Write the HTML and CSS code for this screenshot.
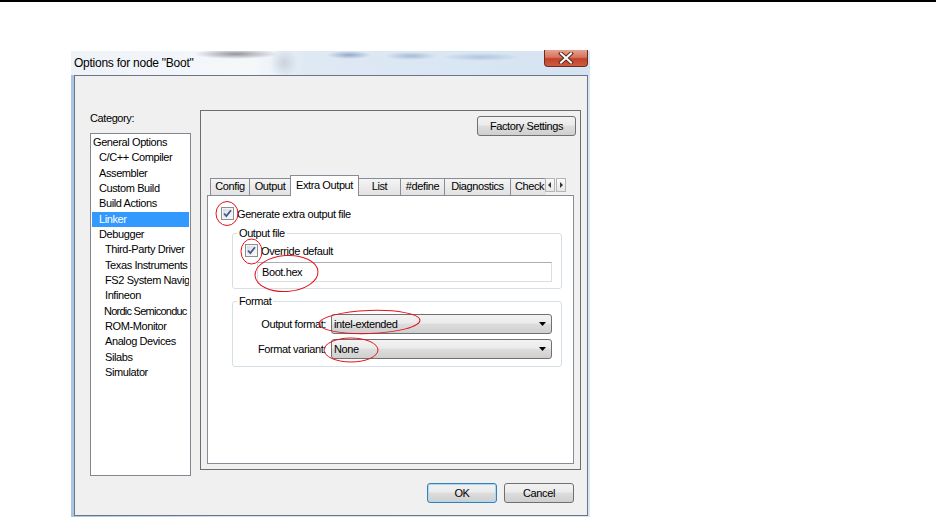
FILE: index.html
```html
<!DOCTYPE html>
<html lang="en">
<head>
    <meta charset="UTF-8">
    <title>Options for node "Boot"</title>
    <link rel="stylesheet" href="styles.css">
</head>
<body>
    <div class="top-rule"></div>

    <div class="window">
        <div class="titlebar">
            <span class="title">Options for node "Boot"</span>
            <button class="close-btn" aria-label="Close">
                <svg width="16" height="12" viewBox="0 0 16 12">
                    <path d="M3 1.5 L13 10.5 M13 1.5 L3 10.5" stroke="#5a2a22" stroke-width="4" stroke-linecap="square"/>
                    <path d="M3 1.5 L13 10.5 M13 1.5 L3 10.5" stroke="#ffffff" stroke-width="2" stroke-linecap="square"/>
                </svg>
            </button>
        </div>

        <div class="client">
            <div class="main-row">
                <div class="category">
                    <div class="category-label">Category:</div>
                    <ul class="cat-list">
                        <li>General Options</li>
                        <li class="lvl1">C/C++ Compiler</li>
                        <li class="lvl1">Assembler</li>
                        <li class="lvl1">Custom Build</li>
                        <li class="lvl1">Build Actions</li>
                        <li class="lvl1 selected">Linker</li>
                        <li class="lvl1">Debugger</li>
                        <li class="lvl2">Third-Party Driver</li>
                        <li class="lvl2">Texas Instruments</li>
                        <li class="lvl2">FS2 System Navig</li>
                        <li class="lvl2">Infineon</li>
                        <li class="lvl2 tight">Nordic Semiconduc</li>
                        <li class="lvl2">ROM-Monitor</li>
                        <li class="lvl2">Analog Devices</li>
                        <li class="lvl2">Silabs</li>
                        <li class="lvl2">Simulator</li>
                    </ul>
                </div>

                <div class="options-panel">
                    <div class="factory-row">
                        <button class="btn factory-btn">Factory Settings</button>
                    </div>

                    <div class="tabs-area">
                        <div class="tab-strip">
                            <div class="tab tab-config">Config</div>
                            <div class="tab tab-output">Output</div>
                            <div class="tab tab-extra active">Extra Output</div>
                            <div class="tab tab-list">List</div>
                            <div class="tab tab-define">#define</div>
                            <div class="tab tab-diag">Diagnostics</div>
                            <div class="tab tab-check">Check</div>
                            <div class="tab-scroll">
                                <span class="scroll-btn">
                                    <svg width="4" height="6" viewBox="0 0 4 6"><path d="M3 0 L0 3 L3 6 Z" fill="#333"/></svg>
                                </span>
                                <span class="scroll-btn">
                                    <svg width="4" height="6" viewBox="0 0 4 6"><path d="M1 0 L4 3 L1 6 Z" fill="#333"/></svg>
                                </span>
                            </div>
                        </div>

                        <div class="tab-page">
                            <label class="check-row first-check">
                                <span class="checkbox">
                                    <svg width="13" height="13" viewBox="0 0 13 13">
                                        <path d="M3 6.5 L5.3 9 L10 3.2" fill="none" stroke="#3f5a93" stroke-width="1.8"/>
                                    </svg>
                                </span>
                                Generate extra output file
                            </label>

                            <fieldset class="group group-file">
                                <legend>Output file</legend>
                                <label class="check-row override-check">
                                    <span class="checkbox">
                                        <svg width="13" height="13" viewBox="0 0 13 13">
                                            <path d="M3 6.5 L5.3 9 L10 3.2" fill="none" stroke="#3f5a93" stroke-width="1.8"/>
                                        </svg>
                                    </span>
                                    Override default
                                </label>
                                <div class="textbox">Boot.hex</div>
                            </fieldset>

                            <fieldset class="group group-format">
                                <legend>Format</legend>
                                <div class="field-row first-field">
                                    <span class="field-label">Output format:</span>
                                    <div class="combo">
                                        <span>intel-extended</span>
                                        <svg width="7" height="4" viewBox="0 0 7 4"><path d="M0 0 H7 L3.5 4 Z" fill="#000"/></svg>
                                    </div>
                                </div>
                                <div class="field-row">
                                    <span class="field-label">Format variant:</span>
                                    <div class="combo">
                                        <span>None</span>
                                        <svg width="7" height="4" viewBox="0 0 7 4"><path d="M0 0 H7 L3.5 4 Z" fill="#000"/></svg>
                                    </div>
                                </div>
                            </fieldset>
                        </div>
                    </div>
                </div>
            </div>

            <div class="dialog-buttons">
                <button class="btn ok-btn">OK</button>
                <button class="btn">Cancel</button>
            </div>
        </div>
    </div>

    <!-- red hand-drawn marks over the screenshot -->
    <svg class="annotations" width="936" height="521" viewBox="0 0 936 521">
        <g fill="none" stroke="#e3121c" stroke-width="1">
            <ellipse cx="227" cy="213.5" rx="11" ry="12"/>
            <ellipse cx="251.5" cy="251.5" rx="10.5" ry="12.5"/>
            <ellipse cx="286.5" cy="273.5" rx="31.5" ry="18" transform="rotate(-4 286.5 273.5)"/>
            <ellipse cx="369.5" cy="322" rx="50.5" ry="11.5" transform="rotate(-2 369.5 322)"/>
            <ellipse cx="351" cy="350" rx="27" ry="12"/>
        </g>
    </svg>
</body>
</html>
```

FILE: styles.css
```css
* {
    box-sizing: border-box;
}

body {
    margin: 0;
    height: 521px;
    overflow: hidden;
    position: relative;
    background: #fff;
    font-family: "Liberation Sans", Arial, sans-serif;
    font-size: 11px;
    letter-spacing: -0.4px;
    color: #000;
}

.top-rule {
    height: 2px;
    background: #000;
}

/* window frame */
.window {
    margin: 49px 0 0 71px;
    width: 519px;
    height: 466px;
    display: flex;
    flex-direction: column;
    background: linear-gradient(to right, #a9c5e4 0%, #cfe0f2 30%, #d9e6f4 100%);
}

.titlebar {
    height: 24px;
    display: flex;
    align-items: center;
    background:
        radial-gradient(ellipse 42px 5px at 165px 3px, rgba(80, 82, 92, 0.6), transparent),
        radial-gradient(ellipse 14px 16px at 213px 12px, rgba(150, 160, 175, 0.35), transparent),
        radial-gradient(ellipse 22px 4px at 278px 4px, rgba(60, 90, 150, 0.45), transparent),
        radial-gradient(ellipse 26px 4px at 340px 5px, rgba(70, 100, 160, 0.35), transparent),
        radial-gradient(ellipse 40px 4px at 410px 6px, rgba(90, 120, 170, 0.3), transparent),
        linear-gradient(to right, #eef3f8 0%, #f5f8fb 35%, #dfe9f4 45%, #d4e3f2 100%);
}

.title {
    padding-left: 3px;
    font-size: 12px;
    letter-spacing: -0.25px;
}

.close-btn {
    margin-left: auto;
    margin-right: 2px;
    align-self: flex-start;
    margin-top: -1px;
    width: 44px;
    height: 17px;
    padding: 0;
    border: 1px solid #6b2d22;
    border-top: none;
    border-radius: 0 0 4px 4px;
    background: linear-gradient(to bottom, #e8a08e 0%, #d67560 45%, #c2412a 55%, #cf5c3e 100%);
    display: flex;
    align-items: center;
    justify-content: center;
}

.client {
    flex: 1;
    margin: 0 2px 1px 3px;
    border: 1px solid #6b7684;
    background: #f0f0f0;
    padding: 34px 6px 0 15px;
}

.main-row {
    display: flex;
    gap: 9px;
    align-items: flex-start;
}

/* category tree */
.category {
    width: 101px;
}

.category-label {
    padding-top: 2px;
    line-height: 13px;
}

.cat-list {
    list-style: none;
    margin: 8px 0 0;
    padding: 1px 1px 0;
    height: 343px;
    border: 1px solid #828790;
    background: #fff;
}

.cat-list li {
    line-height: 15.33px;
    padding-left: 1px;
    white-space: nowrap;
    overflow: hidden;
}

.cat-list .lvl1 {
    padding-left: 7px;
}

.cat-list .lvl2 {
    padding-left: 13px;
}

.cat-list .tight {
    padding-left: 12px;
    letter-spacing: -0.75px;
}

.cat-list .selected {
    background: #3399ff;
    color: #fff;
}

/* right side */
.options-panel {
    width: 381px;
    height: 360px;
    border: 1px solid #6d6d6d;
}

.factory-row {
    display: flex;
    justify-content: flex-end;
    padding: 5px 4px 0 0;
}

.btn {
    height: 20px;
    padding: 0;
    border: 1px solid #707070;
    border-radius: 3px;
    background: linear-gradient(to bottom, #f2f2f2 0%, #ebebeb 45%, #dddddd 50%, #cfcfcf 100%);
    font-family: inherit;
    font-size: 11px;
    letter-spacing: inherit;
    color: #000;
}

.factory-btn {
    width: 99px;
}

.tabs-area {
    margin: 39px 6px 0;
}

.tab-strip {
    height: 20px;
    display: flex;
    align-items: flex-end;
    padding-left: 3px;
}

.tab {
    height: 17px;
    line-height: 15px;
    text-align: center;
    border: 1px solid #898c95;
    border-bottom: none;
    margin-right: -1px;
    background: linear-gradient(to bottom, #f4f4f4 0%, #ebebeb 50%, #e2e2e2 100%);
    white-space: nowrap;
    overflow: hidden;
}

.tab.active {
    position: relative;
    z-index: 1;
    height: 21px;
    line-height: 18px;
    margin-bottom: -1px;
    background: #fff;
}

.tab-config { width: 40px; }
.tab-output { width: 42px; }
.tab-extra { width: 69px; }
.tab-list { width: 43px; }
.tab-define { width: 45px; }
.tab-diag { width: 67px; }

.tab-check {
    width: 36px;
    text-align: left;
    padding-left: 4px;
    border-right: none;
}

.tab-scroll {
    display: flex;
    gap: 1px;
    align-self: flex-start;
    margin-top: 3px;
}

.scroll-btn {
    width: 10px;
    height: 14px;
    display: flex;
    align-items: center;
    justify-content: center;
    border: 1px solid #b5b5b5;
    background: linear-gradient(to bottom, #fafafa, #e6e6e6);
}

.tab-page {
    height: 269px;
    border: 1px solid #898c95;
    background: #fff;
}

.check-row {
    display: flex;
    align-items: center;
    gap: 3px;
    height: 13px;
}

.first-check {
    margin-top: 11px;
    padding-left: 13px;
}

.checkbox {
    width: 13px;
    height: 13px;
    border: 1px solid #8e8f8f;
    background: linear-gradient(135deg, #d3d6da 0%, #eef0f2 60%, #fbfbfb 100%);
    box-shadow: inset 0 0 0 1px #f4f4f4;
    display: flex;
}

.checkbox svg {
    margin: -1px;
}

.group {
    margin: 7px 11px 0 24px;
    padding: 0;
    border: 1px solid #d5dfe5;
    border-radius: 3px;
}

.group legend {
    margin-left: 4px;
    padding: 0 2px;
    line-height: 13px;
}

.group-file {
    padding-bottom: 6px;
}

.override-check {
    margin-top: 4px;
    padding-left: 12px;
}

.textbox {
    margin: 5px 0 0 24px;
    width: 295px;
    height: 20px;
    line-height: 18px;
    padding-left: 4px;
    border: 1px solid #d9dde4;
    border-top-color: #abadb3;
}

.group-format {
    margin-top: 6px;
    padding-bottom: 7px;
}

.field-row {
    display: flex;
    align-items: center;
    gap: 5px;
    margin-top: 5px;
}

.first-field {
    margin-top: 6px;
}

.field-label {
    width: 93px;
    text-align: right;
}

.combo {
    width: 221px;
    height: 20px;
    display: flex;
    align-items: center;
    justify-content: space-between;
    padding: 0 5px 0 2px;
    border: 1px solid #707070;
    border-radius: 3px;
    background: linear-gradient(to bottom, #f2f2f2 0%, #ebebeb 45%, #dddddd 50%, #cfcfcf 100%);
}

.dialog-buttons {
    display: flex;
    justify-content: flex-end;
    gap: 7px;
    margin-top: 7px;
    padding-right: 7px;
}

.dialog-buttons .btn {
    width: 70px;
}

.ok-btn {
    border-color: #3c7fb1;
    box-shadow: inset 0 0 0 1px #a7d9f5;
}

.annotations {
    position: absolute;
    top: 0;
    left: 0;
    pointer-events: none;
}
```
